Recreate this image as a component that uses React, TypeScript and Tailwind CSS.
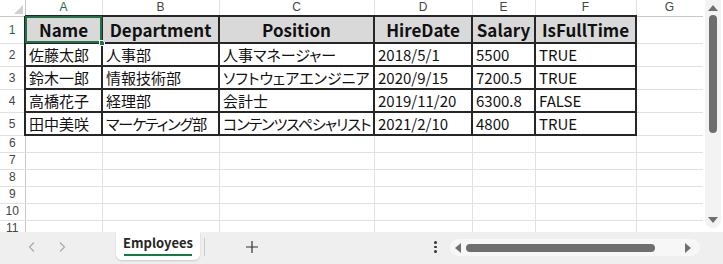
import React from "react";

const cols = [77, 117, 155, 98, 63, 101, 67];
const letters = ["A", "B", "C", "D", "E", "F", "G"];
const headers = ["Name", "Department", "Position", "HireDate", "Salary", "IsFullTime"];
const data = [
  ["佐藤太郎", "人事部", "人事マネージャー", "2018/5/1", "5500", "TRUE"],
  ["鈴木一郎", "情報技術部", "ソフトウェアエンジニア", "2020/9/15", "7200.5", "TRUE"],
  ["高橋花子", "経理部", "会計士", "2019/11/20", "6300.8", "FALSE"],
  ["田中美咲", "マーケティング部", "コンテンツスペシャリスト", "2021/2/10", "4800", "TRUE"],
];
const tight = new Set(["マーケティング部", "コンテンツスペシャリスト"]);

const font = { fontFamily: '"Noto Sans CJK JP", "Noto Sans", sans-serif' };

export default function App() {
  return (
    <div className="w-[723px] h-[264px] overflow-hidden bg-white flex flex-col" style={font}>
      <div className="flex h-[232px]">
        <div className="w-[703px] h-[232px] overflow-hidden">
          <table className="border-collapse table-fixed" style={{ width: 703 }}>
            <colgroup>
              <col style={{ width: 25 }} />
              {cols.map((w, i) => (
                <col key={i} style={{ width: w }} />
              ))}
            </colgroup>
            <tbody>
              <tr className="h-[16px]">
                <td className="relative p-0 border-r border-b border-[#c8c8c8] bg-white">
                  <div className="absolute right-[2px] bottom-[2px] w-0 h-0 border-l-[9px] border-l-transparent border-b-[9px] border-b-[#d0d0d0]" />
                </td>
                {letters.map((l, i) => (
                  <td
                    key={l}
                    className={`p-0 text-center text-[12px] leading-[15px] border-r border-b ${
                      i === 0 ? "text-[#1e6b41] border-b-[#c8c8c8] border-r-[#e1e1e1]" : "text-[#444] border-[#e1e1e1] border-b-[#c8c8c8]"
                    }`}
                    style={{ fontFamily: '"Liberation Sans", sans-serif' }}
                  >
                    {l}
                  </td>
                ))}
              </tr>
              <tr className="h-[27px]">
                <td
                  className="p-0 text-center text-[12px] text-[#1e6b41] border-r border-b border-[#e1e1e1] border-r-[#c8c8c8]"
                  style={{ fontFamily: '"Liberation Sans", sans-serif' }}
                >
                  1
                </td>
                {headers.map((h, i) => (
                  <td
                    key={h}
                    className="relative p-0 text-center text-[17px] font-bold text-[#111] bg-[#d9d9d9] border-2 border-[#262626] leading-[22px]"
                  >
                    {i === 0 && (
                      <>
                        <div className="absolute inset-[-1px] border-2 border-[#1f7244]" />
                        <div className="absolute right-[-4px] bottom-[-4px] w-[6px] h-[6px] bg-[#1f7244] border border-white" />
                      </>
                    )}
                    {h}
                  </td>
                ))}
                <td className="p-0 border-r border-b border-[#e1e1e1]" />
              </tr>
              {data.map((row, r) => (
                <tr key={r} className="h-[23px]">
                  <td
                    className="p-0 text-center text-[12px] text-[#444] border-r border-b border-[#e1e1e1] border-r-[#c8c8c8]"
                    style={{ fontFamily: '"Liberation Sans", sans-serif' }}
                  >
                    {r + 2}
                  </td>
                  {row.map((c, i) => (
                    <td
                      key={i}
                      className={`p-0 pl-[3px] text-[15px] leading-[19px] text-[#111] whitespace-nowrap overflow-hidden border-2 border-[#262626] [font-feature-settings:'palt'] ${
                        tight.has(c) ? "tracking-[-1px]" : ""
                      }`}
                    >
                      {c}
                    </td>
                  ))}
                  <td className="p-0 border-r border-b border-[#e1e1e1]" />
                </tr>
              ))}
              {[6, 7, 8, 9, 10, 11].map((n) => (
                <tr key={n} className="h-[17px]">
                  <td
                    className="p-0 text-center text-[12px] leading-[15px] text-[#444] border-r border-b border-[#e1e1e1] border-r-[#c8c8c8]"
                    style={{ fontFamily: '"Liberation Sans", sans-serif' }}
                  >
                    {n}
                  </td>
                  {cols.map((_, i) => (
                    <td key={i} className="p-0 border-r border-b border-[#e1e1e1]" />
                  ))}
                </tr>
              ))}
            </tbody>
          </table>
        </div>
        <div className="w-[20px] h-[232px] bg-white flex justify-center">
          <div className="w-[16px] h-[228px] bg-[#f3f3f3] rounded-b-[8px] flex flex-col items-center pt-[5px]">
            <div className="w-0 h-0 border-l-[5px] border-l-transparent border-r-[5px] border-r-transparent border-b-[6px] border-b-[#707070]" />
            <div className="w-[8px] h-[118px] mt-[4px] rounded-full bg-[#6e6e6e]" />
            <div className="flex-1" />
            <div className="w-0 h-0 border-l-[5px] border-l-transparent border-r-[5px] border-r-transparent border-t-[6px] border-t-[#707070] mb-[5px]" />
          </div>
        </div>
      </div>
      <div className="h-[32px] bg-[#efefef] flex items-start">
        <div className="w-[116px] flex items-center h-[30px] pl-[26px] gap-[18px] text-[#b0b0b0]">
          <svg width="12" height="12" viewBox="0 0 12 12" fill="none" stroke="#aaa" strokeWidth="1.2">
            <path d="M8 1.5 L3.5 6 L8 10.5" />
          </svg>
          <svg width="12" height="12" viewBox="0 0 12 12" fill="none" stroke="#aaa" strokeWidth="1.2">
            <path d="M4 1.5 L8.5 6 L4 10.5" />
          </svg>
        </div>
        <div className="w-[84px] h-[28px] bg-white rounded-b-[6px] shadow-[0_1px_2px_rgba(0,0,0,0.15)] flex flex-col items-center pt-[2px]">
          <span className="text-[13px] font-semibold text-[#262626] leading-[18px]">Employees</span>
          <div className="w-[68px] h-[2px] bg-[#107c41] mt-[2px]" />
        </div>
        <div className="w-px h-[18px] bg-[#c8c8c8] ml-[4px] mt-[6px]" />
        <div className="ml-[40px] mt-[8px]">
          <svg width="14" height="14" viewBox="0 0 14 14" stroke="#333" strokeWidth="1.2">
            <path d="M7 1 V13 M1 7 H13" />
          </svg>
        </div>
        <div className="ml-[175px] mt-[9px] flex flex-col gap-[2px]">
          <div className="w-[2.5px] h-[2.5px] bg-[#333] rounded-full" />
          <div className="w-[2.5px] h-[2.5px] bg-[#333] rounded-full" />
          <div className="w-[2.5px] h-[2.5px] bg-[#333] rounded-full" />
        </div>
        <div className="ml-[13px] mt-[7px] w-[250px] h-[17px] bg-[#f7f7f7] rounded-full flex items-center px-[5px]">
          <div className="w-0 h-0 border-t-[5px] border-t-transparent border-b-[5px] border-b-transparent border-r-[6px] border-r-[#707070]" />
          <div className="ml-[5px] w-[189px] h-[8px] rounded-full bg-[#6e6e6e]" />
          <div className="flex-1" />
          <div className="w-0 h-0 border-t-[5px] border-t-transparent border-b-[5px] border-b-transparent border-l-[6px] border-l-[#707070] mr-[4px]" />
        </div>
      </div>
    </div>
  );
}
